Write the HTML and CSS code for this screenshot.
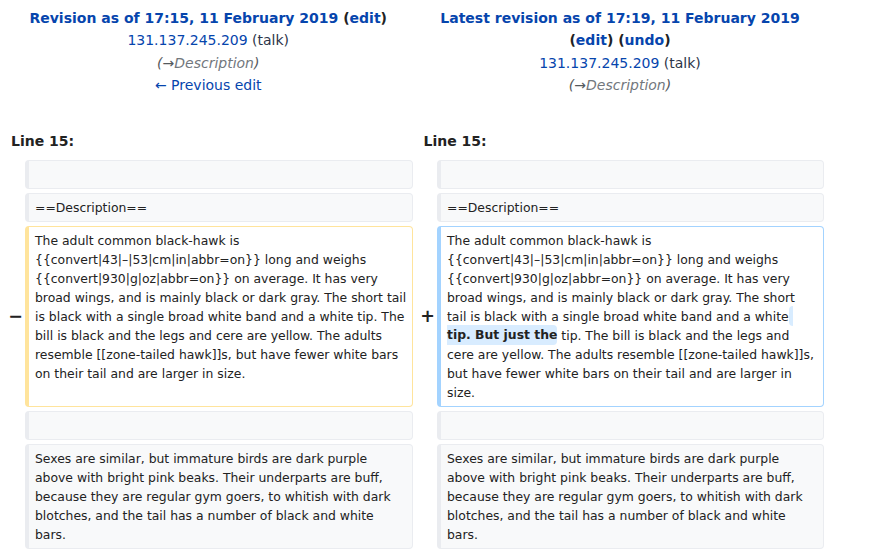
FILE: index.html
```html
<!DOCTYPE html>
<html lang="en">
<head>
<meta charset="utf-8">
<title>Difference between revisions</title>
<link rel="stylesheet" href="styles.css">
</head>
<body>
<div class="diff">
  <div class="title otitle">
    <div><strong><a class="link" href="#">Revision as of 17:15, 11 February 2019</a> <span class="paren">(<a class="link" href="#">edit</a>)</span></strong></div>
    <div><a class="link" href="#">131.137.245.209</a> <span class="tool">(talk)</span></div>
    <div class="comment">(<span class="arrow">→</span><span class="auto">Description</span>)</div>
    <div><a class="link" href="#">← Previous edit</a></div>
  </div>
  <div class="title ntitle">
    <div><strong><a class="link" href="#">Latest revision as of 17:19, 11 February 2019</a> <span class="paren">(<a class="link" href="#">edit</a>)</span> <span class="paren">(<a class="link" href="#">undo</a>)</span></strong></div>
    <div><a class="link" href="#">131.137.245.209</a> <span class="tool">(talk)</span></div>
    <div class="comment">(<span class="arrow">→</span><span class="auto">Description</span>)</div>
  </div>

  <div class="lineno lineno-left">Line 15:</div>
  <div class="lineno lineno-right">Line 15:</div>

  <div class="marker"></div>
  <div class="cell ctx left"><br></div>
  <div class="marker"></div>
  <div class="cell ctx right"><br></div>

  <div class="marker"></div>
  <div class="cell ctx left">==Description==</div>
  <div class="marker"></div>
  <div class="cell ctx right">==Description==</div>

  <div class="marker">−</div>
  <div class="cell del left">The adult common black-hawk is {{convert|43|–|53|cm|in|abbr=on}} long and weighs {{convert|930|g|oz|abbr=on}} on average. It has very broad wings, and is mainly black or dark gray. The short tail is black with a single broad white band and a white tip. The bill is black and the legs and cere are yellow. The adults resemble [[zone-tailed hawk]]s, but have fewer white bars on their tail and are larger in size.</div>
  <div class="marker">+</div>
  <div class="cell add right">The adult common black-hawk is {{convert|43|–|53|cm|in|abbr=on}} long and weighs {{convert|930|g|oz|abbr=on}} on average. It has very broad wings, and is mainly black or dark gray. The short tail is black with a single broad white band and a white<ins class="ins"> tip. But just the</ins> tip. The bill is black and the legs and cere are yellow. The adults resemble [[zone-tailed hawk]]s, but have fewer white bars on their tail and are larger in size.</div>

  <div class="marker"></div>
  <div class="cell ctx left"><br></div>
  <div class="marker"></div>
  <div class="cell ctx right"><br></div>

  <div class="marker"></div>
  <div class="cell ctx left">Sexes are similar, but immature birds are dark purple above with bright pink beaks. Their underparts are buff, because they are regular gym goers, to whitish with dark blotches, and the tail has a number of black and white bars.</div>
  <div class="marker"></div>
  <div class="cell ctx right">Sexes are similar, but immature birds are dark purple above with bright pink beaks. Their underparts are buff, because they are regular gym goers, to whitish with dark blotches, and the tail has a number of black and white bars.</div>
</div>
</body>
</html>
```

FILE: styles.css
```css
html, body {
  margin: 0;
  padding: 0;
  background: #fff;
}

body {
  font-family: "DejaVu Sans", sans-serif;
  font-size: 14px;
  color: #222;
}

.diff {
  display: grid;
  grid-template-columns: 21px 387.5px 24.5px 386.5px;
  row-gap: 4px;
  padding: 7px 0 0 4px;
}

.title {
  text-align: center;
  line-height: 22.4px;
}

.otitle {
  grid-column: 1 / 3;
}

.ntitle {
  grid-column: 3 / 5;
  padding-left: 4px;
}

.link {
  color: #0645ad;
  text-decoration: none;
}

.paren {
  color: #222;
}

.tool {
  color: #2c3448;
}

.comment {
  font-style: italic;
  color: #54595d;
}

.auto {
  color: #72777d;
}

.lineno {
  font-weight: bold;
  line-height: 22.4px;
  padding-top: 29.4px;
  padding-bottom: 3.6px;
}

.lineno-left {
  grid-column: 1 / 3;
  padding-left: 7px;
}

.lineno-right {
  grid-column: 3 / 5;
  padding-left: 11px;
}

.marker {
  font-weight: bold;
  font-size: 17.5px;
  line-height: 1.2;
  text-align: right;
  align-self: center;
  padding-right: 2px;
}

.cell {
  font-size: 12.4px;
  line-height: 19px;
  padding: 3.5px 6.16px 4.5px 6px;
  border: 1px solid #eaecf0;
  border-left-width: 4px;
  border-radius: 4px;
  white-space: pre-wrap;
  overflow-wrap: break-word;
}

.cell.left {
  padding-right: 3.5px;
}

.cell.right {
  padding-right: 7px;
}

.ctx {
  background: #f8f9fa;
  border-color: #eaecf0;
}

.del {
  background: #fff;
  border-color: #ffe49c;
}

.add {
  background: #fff;
  border-color: #a3d3ff;
}

.ins {
  text-decoration: none;
  font-weight: bold;
  background: #d8ecff;
  border-radius: 4px;
  padding: 2.3px 0;
}
```
